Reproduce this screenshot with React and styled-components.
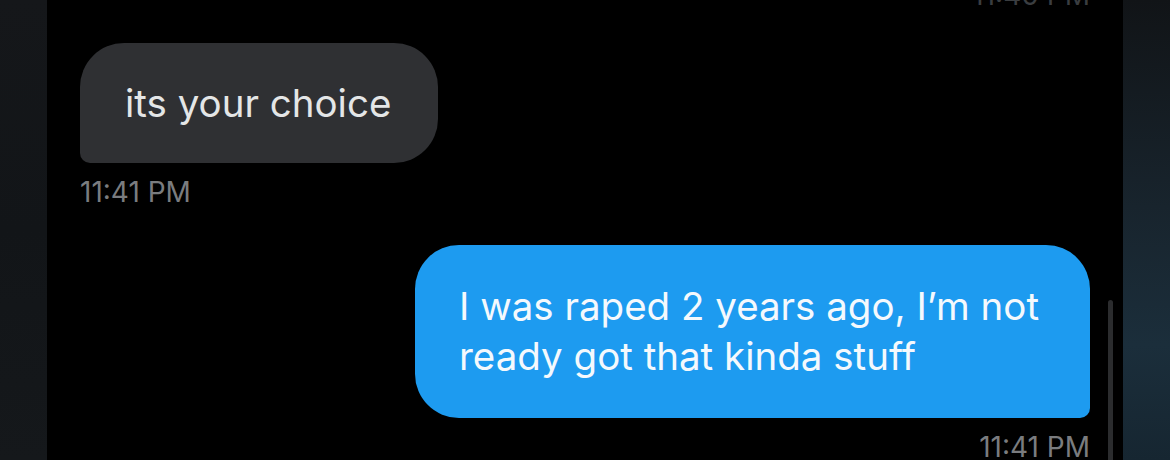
import React from 'react';
import styled, { createGlobalStyle } from 'styled-components';

const GlobalStyle = createGlobalStyle`
  html, body {
    margin: 0;
    padding: 0;
    background: #000;
  }
  body {
    font-family: Inter, "Liberation Sans", sans-serif;
  }
`;

const messages = [
  { id: 1, side: 'in', text: 'its your choice', time: '11:41 PM' },
  {
    id: 2,
    side: 'out',
    text: 'I was raped 2 years ago, I’m not ready got that kinda stuff',
    time: '11:41 PM',
  },
];

function App() {
  return (
    <Screen>
      <GlobalStyle />
      <SideStrip />
      <Chat>
        <TopStamp>11:40 PM</TopStamp>
        {messages.map((m) => (
          <MessageGroup key={m.id} $side={m.side}>
            <Bubble $side={m.side}>{m.text}</Bubble>
            <Time>{m.time}</Time>
          </MessageGroup>
        ))}
        <Scrollbar />
      </Chat>
      <SideStrip $right />
    </Screen>
  );
}

const Screen = styled.div`
  display: flex;
  width: 1170px;
  height: 460px;
  overflow: hidden;
  background: #000;
`;

const SideStrip = styled.div`
  width: 47px;
  flex-shrink: 0;
  background: ${(p) =>
    p.$right
      ? 'linear-gradient(to bottom, #111417 0%, #18242d 45%, #1b2e3b 75%, #162631 100%)'
      : 'linear-gradient(to bottom, #15171a, #121518 50%, #15181b)'};
`;

const Chat = styled.main`
  position: relative;
  flex: 1;
  display: flex;
  flex-direction: column;
  padding: 43px 33px 0;
`;

const TopStamp = styled.div`
  position: absolute;
  top: -22px;
  right: 33px;
  color: #3a3d40;
  font-size: 28px;
`;

const MessageGroup = styled.div`
  display: flex;
  flex-direction: column;
  align-items: ${(p) => (p.$side === 'out' ? 'flex-end' : 'flex-start')};
  margin-bottom: ${(p) => (p.$side === 'out' ? '0' : '38px')};
`;

const Bubble = styled.div`
  box-sizing: border-box;
  max-width: 675px;
  font-size: 38.5px;
  line-height: 50px;
  color: ${(p) => (p.$side === 'out' ? '#f4f9fd' : '#e4e6e7')};
  background: ${(p) => (p.$side === 'out' ? '#1d9bf0' : '#2f3033')};
  border-radius: ${(p) => (p.$side === 'out' ? '44px 44px 10px 44px' : '44px 44px 44px 10px')};
  padding: ${(p) => (p.$side === 'out' ? '36px 44px 37px 44px' : '35px 47px 35px 45px')};
`;

const Time = styled.div`
  margin-top: 14px;
  font-size: 28px;
  line-height: 30px;
  color: #7a7c7f;
`;

const Scrollbar = styled.div`
  position: absolute;
  right: 10px;
  top: 300px;
  width: 5px;
  height: 180px;
  border-radius: 3px;
  background: #2b2c2e;
`;

export default App;
